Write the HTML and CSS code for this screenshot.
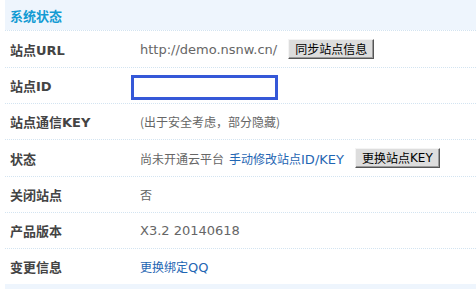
FILE: index.html
```html
<!DOCTYPE html>
<html lang="zh-CN">
<head>
<meta charset="utf-8">
<title>系统状态</title>
<link rel="stylesheet" href="styles.css">
</head>
<body>
<div class="panel">
  <div class="head">系统状态</div>
  <div class="row r1">
    <div class="label">站点URL</div>
    <div class="value"><span class="latin">http://demo.nsnw.cn/</span><button class="btn">同步站点信息</button></div>
  </div>
  <div class="row">
    <div class="label">站点ID</div>
    <div class="value"><input class="field" type="text"></div>
  </div>
  <div class="row">
    <div class="label">站点通信KEY</div>
    <div class="value"><span class="zh">(出于安全考虑，部分隐藏)</span></div>
  </div>
  <div class="row r4">
    <div class="label">状态</div>
    <div class="value"><span class="zh">尚未开通云平台</span><a class="link" href="#"><span class="zh">手动修改站点</span><span class="latin">ID/KEY</span></a><button class="btn">更换站点<span class="latin">KEY</span></button></div>
  </div>
  <div class="row">
    <div class="label">关闭站点</div>
    <div class="value"><span class="zh">否</span></div>
  </div>
  <div class="row">
    <div class="label">产品版本</div>
    <div class="value"><span class="latin">X3.2 20140618</span></div>
  </div>
  <div class="row last">
    <div class="label">变更信息</div>
    <div class="value"><a class="link solo" href="#"><span class="zh">更换绑定</span><span class="latin">QQ</span></a></div>
  </div>
  <div class="foot"></div>
</div>
</body>
</html>
```
FILE: styles.css
```css
html, body {
  margin: 0;
  padding: 0;
  background: #ffffff;
}
body {
  font-family: "DejaVu Sans", "Noto Sans CJK SC", sans-serif;
  font-size: 13px;
  color: #666666;
}
.panel {
  margin-left: 5px;
}
.head {
  height: 30px;
  background: #eef5fd;
  color: #139bd3;
  font-weight: bold;
  font-size: 13px;
  padding-left: 5px;
  display: flex;
  align-items: center;
  font-family: "Noto Sans CJK SC", sans-serif;
}
.row {
  display: flex;
  align-items: center;
  height: 35px;
  border-top: 1px dotted #d3e4f1;
}
.row.r1, .row.r4 {
  height: 36px;
}
.row.last {
  height: 35px;
}
.label {
  width: 121px;
  padding-left: 5px;
  font-weight: bold;
  color: #444444;
  font-size: 13px;
  font-family: "DejaVu Sans", "Noto Sans CJK SC", sans-serif;
}
.value {
  display: flex;
  align-items: center;
  padding-left: 9px;
  flex: 1;
}
.zh {
  font-family: "Noto Sans CJK SC", sans-serif;
  font-size: 12px;
}
.latin {
  font-family: "DejaVu Sans", sans-serif;
  font-size: 13px;
}
.link {
  color: #1f66b3;
  text-decoration: none;
  margin-left: 5px;
}
.link.solo {
  margin-left: 0;
}
.btn {
  height: 20px;
  margin-left: 11px;
  padding: 0 6px;
  background: #dddddd;
  color: #000000;
  font-family: "Noto Sans CJK SC", sans-serif;
  font-size: 12px;
  line-height: 16px;
  border: 1px solid;
  border-color: #f4f4f4 #555555 #555555 #f4f4f4;
  box-shadow: inset -1px -1px 0 #9a9a9a;
  display: flex;
  align-items: center;
}
.btn .latin {
  font-size: 12px;
}
.field {
  margin: 3px 0 0 -9px;
  width: 141px;
  height: 19px;
  padding: 0;
  border: 3px solid #3558d8;
  background: #ffffff;
  box-sizing: content-box;
}
.foot {
  height: 5px;
  background: #eef5fd;
}
```
